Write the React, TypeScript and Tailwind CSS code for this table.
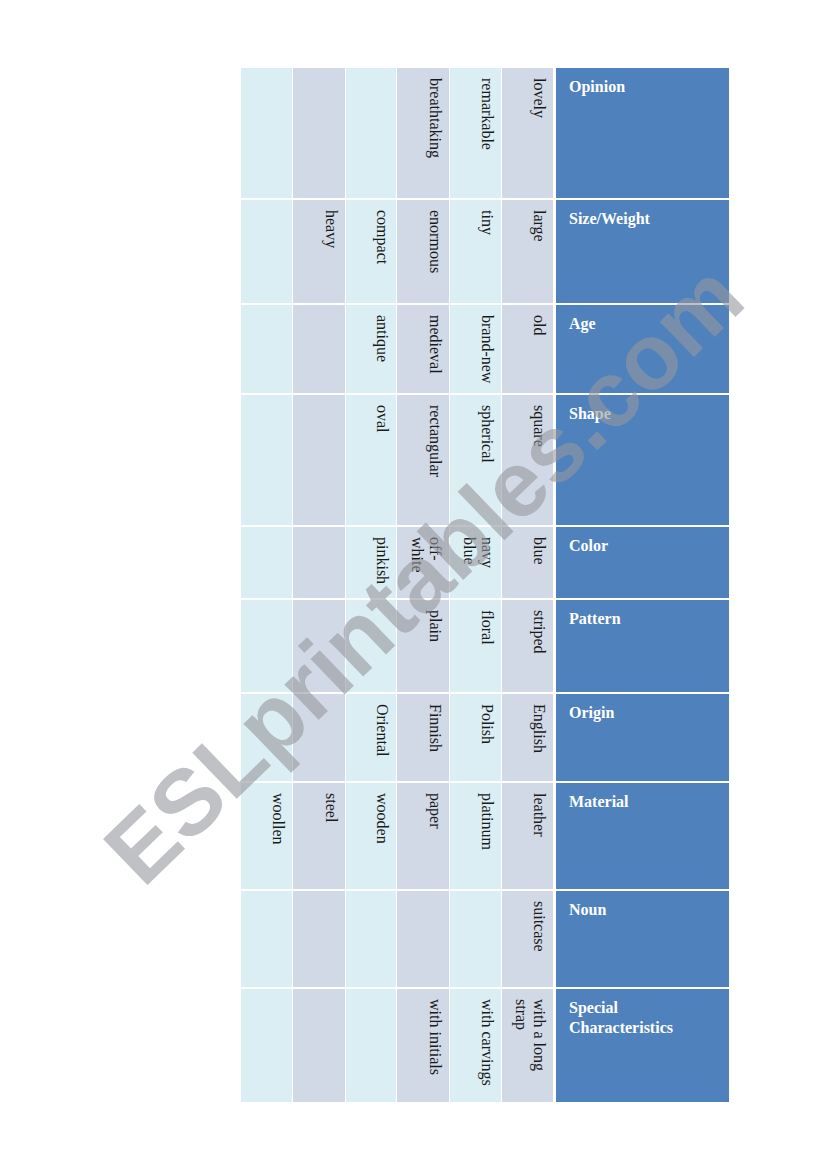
import React from 'react';

type Row = { label: string[]; cells: string[][] };

const rows: Row[] = [
  { label: ['Opinion'], cells: [['lovely'], ['remarkable'], ['breathtaking'], [], [], []] },
  { label: ['Size/Weight'], cells: [['large'], ['tiny'], ['enormous'], ['compact'], ['heavy'], []] },
  { label: ['Age'], cells: [['old'], ['brand-new'], ['medieval'], ['antique'], [], []] },
  { label: ['Shape'], cells: [['square'], ['spherical'], ['rectangular'], ['oval'], [], []] },
  { label: ['Color'], cells: [['blue'], ['navy', 'blue'], ['off-', 'white'], ['pinkish'], [], []] },
  { label: ['Pattern'], cells: [['striped'], ['floral'], ['plain'], [], [], []] },
  { label: ['Origin'], cells: [['English'], ['Polish'], ['Finnish'], ['Oriental'], [], []] },
  { label: ['Material'], cells: [['leather'], ['platinum'], ['paper'], ['wooden'], ['steel'], ['woollen']] },
  { label: ['Noun'], cells: [['suitcase'], [], [], [], [], []] },
  { label: ['Special', 'Characteristics'], cells: [['with a long', 'strap'], ['with carvings'], ['with initials'], [], [], []] },
];

// column backgrounds, left (c1) to right (c6)
const colBg = [
  'bg-[#dbeef4]',
  'bg-[#d1d9e7]',
  'bg-[#dbeef4]',
  'bg-[#d1d9e7]',
  'bg-[#dbeef4]',
  'bg-[#d1d9e7]',
];

export default function App() {
  return (
    <div className="relative w-[826px] h-[1169px] overflow-hidden bg-white pt-[68px] pl-[241px]">
      <div className="grid grid-cols-[51px_52px_50px_52px_51px_51px_175px] grid-rows-[130px_103px_88px_130px_71px_92px_87px_106px_96px_113px] gap-x-px gap-y-[2px] font-['Liberation_Serif',serif]">
        {rows.map((row, ri) => {
          const leftToRight = [...row.cells].reverse();
          return (
            <React.Fragment key={ri}>
              {leftToRight.map((lines, ci) => (
                <div
                  key={ci}
                  className={`${colBg[ci]} [writing-mode:vertical-rl] pt-[10px] pr-[5px] text-[16px] leading-[18px] text-[#1a1a1a]`}
                >
                  {lines.map((l, li) => (
                    <React.Fragment key={li}>
                      {li > 0 && <br />}
                      {l}
                    </React.Fragment>
                  ))}
                </div>
              ))}
              <div className="ml-[2px] bg-[#4f81bd] pl-[13px] pt-[9px] text-[16px] leading-[20px] font-bold text-white">
                {row.label.map((l, li) => (
                  <div key={li}>{l}</div>
                ))}
              </div>
            </React.Fragment>
          );
        })}
      </div>

      <div className="pointer-events-none absolute left-[424px] top-[574px] -translate-x-1/2 -translate-y-1/2 -rotate-44 whitespace-nowrap font-['Liberation_Sans',sans-serif] text-[93px] leading-none font-bold text-[rgba(150,152,156,0.6)]">
        ESLprintables.com
      </div>
    </div>
  );
}
